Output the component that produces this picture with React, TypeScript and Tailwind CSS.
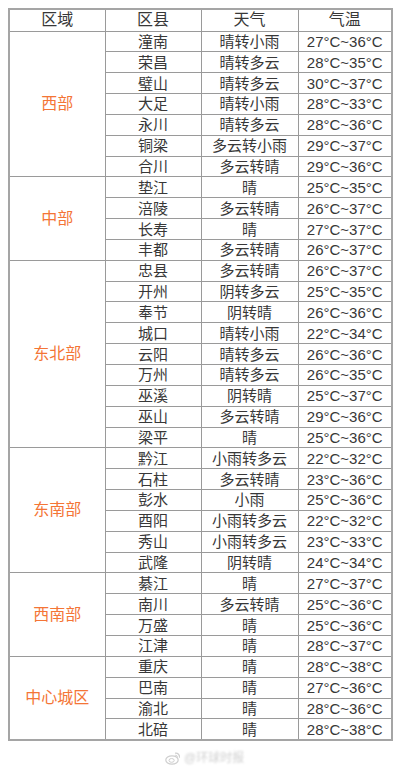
import React from 'react';

type Row = [string, string, string];

const groups: { region: string; rows: Row[] }[] = [
  {
    region: '西部',
    rows: [
      ['潼南', '晴转小雨', '27°C~36°C'],
      ['荣昌', '晴转多云', '28°C~35°C'],
      ['璧山', '晴转多云', '30°C~37°C'],
      ['大足', '晴转小雨', '28°C~33°C'],
      ['永川', '晴转多云', '28°C~36°C'],
      ['铜梁', '多云转小雨', '29°C~37°C'],
      ['合川', '多云转晴', '29°C~36°C'],
    ],
  },
  {
    region: '中部',
    rows: [
      ['垫江', '晴', '25°C~35°C'],
      ['涪陵', '多云转晴', '26°C~37°C'],
      ['长寿', '晴', '27°C~37°C'],
      ['丰都', '多云转晴', '26°C~37°C'],
    ],
  },
  {
    region: '东北部',
    rows: [
      ['忠县', '多云转晴', '26°C~37°C'],
      ['开州', '阴转多云', '25°C~35°C'],
      ['奉节', '阴转晴', '26°C~36°C'],
      ['城口', '晴转小雨', '22°C~34°C'],
      ['云阳', '晴转多云', '26°C~36°C'],
      ['万州', '晴转多云', '26°C~35°C'],
      ['巫溪', '阴转晴', '25°C~37°C'],
      ['巫山', '多云转晴', '29°C~36°C'],
      ['梁平', '晴', '25°C~36°C'],
    ],
  },
  {
    region: '东南部',
    rows: [
      ['黔江', '小雨转多云', '22°C~32°C'],
      ['石柱', '多云转晴', '23°C~36°C'],
      ['彭水', '小雨', '25°C~36°C'],
      ['酉阳', '小雨转多云', '22°C~32°C'],
      ['秀山', '小雨转多云', '23°C~33°C'],
      ['武隆', '阴转晴', '24°C~34°C'],
    ],
  },
  {
    region: '西南部',
    rows: [
      ['綦江', '晴', '27°C~37°C'],
      ['南川', '多云转晴', '25°C~36°C'],
      ['万盛', '晴', '25°C~36°C'],
      ['江津', '晴', '28°C~37°C'],
    ],
  },
  {
    region: '中心城区',
    rows: [
      ['重庆', '晴', '28°C~38°C'],
      ['巴南', '晴', '27°C~36°C'],
      ['渝北', '晴', '28°C~36°C'],
      ['北碚', '晴', '28°C~38°C'],
    ],
  },
];

const cell = 'border border-[#9a9a9a] text-center align-middle p-0 leading-none';

function WeiboLogo() {
  return (
    <svg width="16" height="14" viewBox="0 0 16 14" fill="none">
      <ellipse cx="7" cy="9" rx="6.2" ry="4.2" stroke="#cfcfcf" strokeWidth="1.2" />
      <ellipse cx="6.6" cy="9.4" rx="2.6" ry="1.9" stroke="#cfcfcf" strokeWidth="1" />
      <path d="M10.5 2.2a3.6 3.6 0 0 1 4 4" stroke="#cfcfcf" strokeWidth="1.2" strokeLinecap="round" />
      <path d="M10.6 4.2a1.6 1.6 0 0 1 1.9 1.8" stroke="#cfcfcf" strokeWidth="1" strokeLinecap="round" />
    </svg>
  );
}

export default function App() {
  return (
    <div
      className="w-[401px] h-[769px] bg-white pt-[8px] pl-[8px] text-[#383838]"
      style={{ fontFamily: '"Liberation Sans", "Noto Sans CJK SC", sans-serif' }}
    >
      <table className="w-[383px] border-collapse border-2 border-[#a5a5a5] table-fixed">
        <colgroup>
          <col className="w-[96px]" />
          <col className="w-[96px]" />
          <col className="w-[97px]" />
          <col className="w-[94px]" />
        </colgroup>
        <thead>
          <tr className="h-[22px]">
            <th className={`${cell} font-normal text-[16px]`}>区域</th>
            <th className={`${cell} font-normal text-[16px]`}>区县</th>
            <th className={`${cell} font-normal text-[16px]`}>天气</th>
            <th className={`${cell} font-normal text-[16px]`}>气温</th>
          </tr>
        </thead>
        <tbody>
          {groups.map((g) =>
            g.rows.map((r, i) => (
              <tr key={g.region + r[0]} className="h-[20.85px] text-[15px]">
                {i === 0 && (
                  <td rowSpan={g.rows.length} className={`${cell} text-[#f47536] text-[16px]`}>
                    {g.region}
                  </td>
                )}
                <td className={cell}>{r[0]}</td>
                <td className={cell}>{r[1]}</td>
                <td className={cell}>{r[2]}</td>
              </tr>
            ))
          )}
        </tbody>
      </table>
      <div className="flex items-center gap-[3px] pl-[157px] mt-[8px]">
        <WeiboLogo />
        <span className="text-[12px] text-[#d0d0d0] blur-[1px]">@环球时报</span>
      </div>
    </div>
  );
}
